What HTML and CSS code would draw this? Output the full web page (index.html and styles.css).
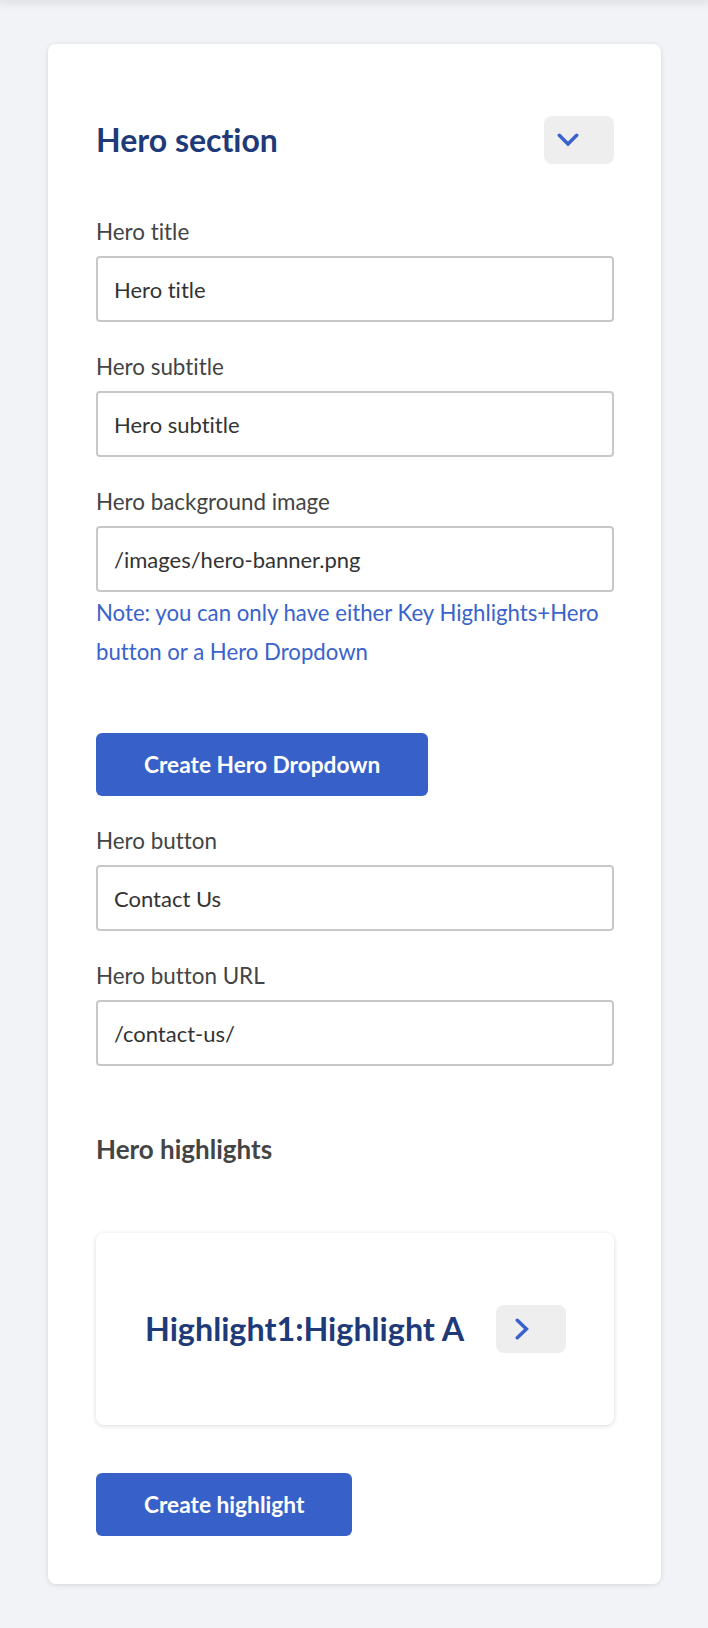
FILE: index.html
```html
<!DOCTYPE html>
<html lang="en">
<head>
<meta charset="utf-8">
<title>Hero section</title>
<link rel="stylesheet" href="styles.css">
</head>
<body>
<div class="topbar"></div>
<main class="card">
  <div class="card-head">
    <h2 class="section-title">Hero section</h2>
    <button class="icon-btn icon-btn--down" type="button" aria-label="Collapse">
      <svg width="22" height="14" viewBox="0 0 22 14"><polyline points="2.3,2.3 11,11 19.7,2.3" fill="none" stroke="#3a62cc" stroke-width="3.5" stroke-linecap="round" stroke-linejoin="miter"/></svg>
    </button>
  </div>

  <div class="field field--first">
    <label class="field-label">Hero title</label>
    <input class="field-input" type="text" value="Hero title">
  </div>
  <div class="field">
    <label class="field-label">Hero subtitle</label>
    <input class="field-input" type="text" value="Hero subtitle">
  </div>
  <div class="field">
    <label class="field-label">Hero background image</label>
    <input class="field-input" type="text" value="/images/hero-banner.png">
  </div>
  <p class="note">Note: you can only have either Key Highlights+Hero button or a Hero Dropdown</p>

  <button class="primary-btn primary-btn--dropdown" type="button">Create Hero Dropdown</button>

  <div class="field">
    <label class="field-label">Hero button</label>
    <input class="field-input" type="text" value="Contact Us">
  </div>
  <div class="field">
    <label class="field-label">Hero button URL</label>
    <input class="field-input" type="text" value="/contact-us/">
  </div>

  <h3 class="sub-title">Hero highlights</h3>

  <div class="highlight-card">
    <span class="highlight-title">Highlight1:Highlight A</span>
    <button class="icon-btn icon-btn--right" type="button" aria-label="Expand">
      <svg width="14" height="22" viewBox="0 0 14 22"><polyline points="2.3,2.3 11.4,11 2.3,19.7" fill="none" stroke="#3a62cc" stroke-width="3.5" stroke-linecap="round" stroke-linejoin="miter"/></svg>
    </button>
  </div>

  <button class="primary-btn primary-btn--highlight" type="button">Create highlight</button>
</main>
</body>
</html>
```

FILE: styles.css
```css
* {
  box-sizing: border-box;
}

html, body {
  margin: 0;
  padding: 0;
}

body {
  background: #f2f3f7;
  font-family: Lato, "Open Sans", "Liberation Sans", sans-serif;
  font-variant-ligatures: no-common-ligatures;
  min-height: 1628px;
}

.topbar {
  height: 0;
  box-shadow: 0 0 8px 2px rgba(0, 0, 0, 0.16);
}

.card {
  margin: 44px 0 0 48px;
  width: 613px;
  background: #ffffff;
  border-radius: 8px;
  box-shadow: 0 1px 5px rgba(0, 0, 0, 0.12);
  padding: 72px 47px 48px 48px;
  display: flex;
  flex-direction: column;
  align-items: flex-start;
}

.card-head {
  width: 100%;
  height: 48px;
  display: flex;
  align-items: center;
  justify-content: space-between;
}

.section-title {
  margin: 0;
  font-size: 32px;
  line-height: 1;
  font-weight: 700;
  color: #1f3a78;
}

.icon-btn {
  width: 70px;
  height: 48px;
  border: none;
  border-radius: 8px;
  background: #eeeeee;
  display: flex;
  align-items: center;
  padding: 0;
  cursor: pointer;
  flex: none;
}

.icon-btn--down {
  padding-left: 13px;
}

.icon-btn--right {
  padding-left: 19px;
}

.icon-btn svg {
  display: block;
}

.field {
  width: 100%;
  margin-top: 31px;
  display: flex;
  flex-direction: column;
}

.field--first {
  margin-top: 54px;
}

.field-label {
  font-size: 22.4px;
  line-height: 28px;
  color: #444444;
  margin-bottom: 10px;
}

.field-input {
  width: 100%;
  height: 66px;
  border: 2px solid #c8c8c8;
  border-radius: 4px;
  padding: 0 16px;
  font-family: inherit;
  font-variant-ligatures: no-common-ligatures;
  font-size: 22px;
  color: #333333;
  background: #ffffff;
  outline: none;
}

.note {
  margin: 1px 0 0;
  font-size: 22.2px;
  line-height: 39px;
  color: #3a63cc;
}

.primary-btn {
  height: 63px;
  padding: 0 48px;
  border: none;
  border-radius: 6px;
  background: #3761c8;
  color: #ffffff;
  font-family: inherit;
  font-size: 22.7px;
  font-weight: 700;
  cursor: pointer;
}

.primary-btn--dropdown {
  margin-top: 62px;
}

.primary-btn--highlight {
  margin-top: 48px;
}

.sub-title {
  margin: 68px 0 0;
  font-size: 26px;
  line-height: 31px;
  font-weight: 700;
  color: #444444;
}

.highlight-card {
  margin-top: 68px;
  width: 100%;
  background: #ffffff;
  border-radius: 8px;
  box-shadow: 0 1px 5px rgba(0, 0, 0, 0.15);
  padding: 72px 0 72px 49px;
  display: flex;
  align-items: center;
  gap: 32px;
}

.highlight-title {
  font-size: 32.3px;
  line-height: 1;
  font-weight: 700;
  color: #1f3a78;
}
```
